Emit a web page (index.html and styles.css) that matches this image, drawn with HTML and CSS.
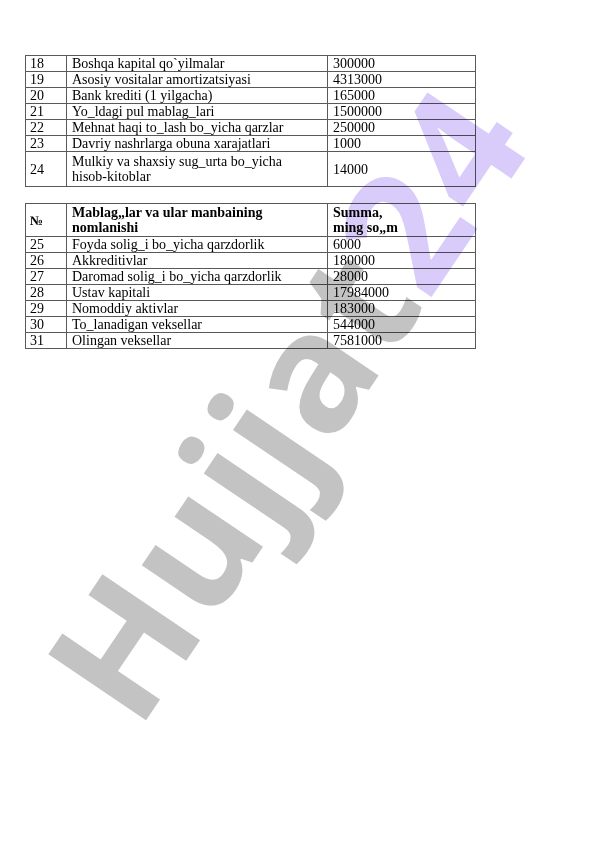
FILE: index.html
```html
<!DOCTYPE html>
<html lang="uz">
<head>
<meta charset="utf-8">
<title>Hujjat24</title>
<link rel="stylesheet" href="styles.css">
</head>
<body>
<div class="page">
  <table class="grid">
    <colgroup><col class="c1"><col class="c2"><col class="c3"></colgroup>
    <tr><td>18</td><td>Boshqa kapital qo`yilmalar</td><td>300000</td></tr>
    <tr><td>19</td><td>Asosiy vositalar amortizatsiyasi</td><td>4313000</td></tr>
    <tr><td>20</td><td>Bank krediti (1 yilgacha)</td><td>165000</td></tr>
    <tr><td>21</td><td>Yo_ldagi pul mablag_lari</td><td>1500000</td></tr>
    <tr><td>22</td><td>Mehnat haqi to_lash bo_yicha qarzlar</td><td>250000</td></tr>
    <tr><td>23</td><td>Davriy nashrlarga obuna xarajatlari</td><td>1000</td></tr>
    <tr class="tall"><td>24</td><td>Mulkiy va shaxsiy sug_urta bo_yicha<br>hisob-kitoblar</td><td>14000</td></tr>
  </table>

  <table class="grid second">
    <colgroup><col class="c1"><col class="c2"><col class="c3"></colgroup>
    <tr class="head"><td>№</td><td>Mablag„lar va ular manbaining<br>nomlanishi</td><td>Summa,<br>ming so„m</td></tr>
    <tr><td>25</td><td>Foyda solig_i bo_yicha qarzdorlik</td><td>6000</td></tr>
    <tr><td>26</td><td>Akkreditivlar</td><td>180000</td></tr>
    <tr><td>27</td><td>Daromad solig_i bo_yicha qarzdorlik</td><td>28000</td></tr>
    <tr><td>28</td><td>Ustav kapitali</td><td>17984000</td></tr>
    <tr><td>29</td><td>Nomoddiy aktivlar</td><td>183000</td></tr>
    <tr><td>30</td><td>To_lanadigan veksellar</td><td>544000</td></tr>
    <tr><td>31</td><td>Olingan veksellar</td><td>7581000</td></tr>
  </table>
</div>
<div class="watermark"><span class="wm-gray">Hujjat</span><span class="wm-purple">24</span></div>
</body>
</html>
```

FILE: styles.css
```css
html, body {
  margin: 0;
  padding: 0;
  background: #ffffff;
}
body {
  width: 596px;
  min-height: 842px;
  position: relative;
  font-family: "Liberation Serif", "Times New Roman", serif;
  color: #000;
}
.page {
  padding: 55px 0 0 25px;
  display: flex;
  flex-direction: column;
  gap: 16px;
}
.grid {
  border-collapse: collapse;
  width: 450px;
  table-layout: fixed;
  font-size: 14px;
  line-height: 15px;
}
.c1 { width: 41px; }
.c2 { width: 261px; }
.c3 { width: 148px; }
.grid td {
  border: 1px solid #595959;
  padding: 0 4px 0 5px;
  vertical-align: middle;
  white-space: nowrap;
}
.grid td:first-child { padding-left: 4px; }
.grid .tall td { padding-top: 2px; padding-bottom: 2px; }
.grid .head td { font-weight: bold; padding-top: 1px; padding-bottom: 1px; }
.grid .head td:first-child { font-size: 13px; }
.watermark {
  position: absolute;
  left: 284px;
  top: 402px;
  transform: translate(-50%, -50%) rotate(-56deg);
  font-family: "Open Sans", "Liberation Sans", Arial, sans-serif;
  font-weight: bold;
  font-size: 165px;
  letter-spacing: 2px;
  line-height: 1;
  white-space: nowrap;
  mix-blend-mode: multiply;
  pointer-events: none;
}
.wm-gray { color: #c3c3c3; }
.wm-purple { color: #d9ccfa; }
```
